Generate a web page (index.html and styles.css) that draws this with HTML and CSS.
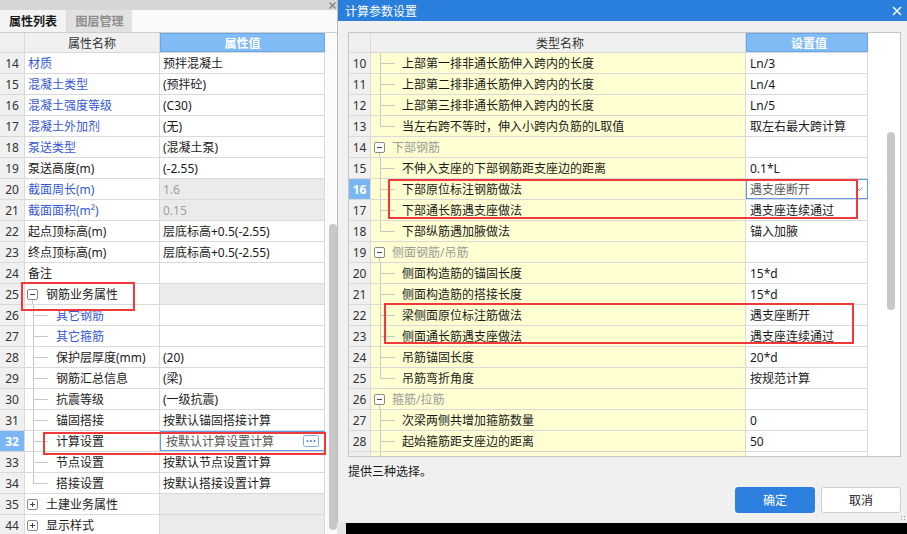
FILE: index.html
```html
<!DOCTYPE html>
<html lang="zh-CN">
<head>
    <meta charset="UTF-8">
    <title>计算参数设置</title>
    <link rel="stylesheet" href="styles.css">
</head>
<body>
    <div class="left">
        <div class="left-top">
            <svg class="left-close" width="7" height="7" viewBox="0 0 7 7"><path d="M0.5 0.5L6.5 6.5M6.5 0.5L0.5 6.5" stroke="#808080" stroke-width="1.2"/></svg>
        </div>
        <div class="tabs">
            <div class="tab on">属性列表</div>
            <div class="tab off">图层管理</div>
        </div>
        <div class="lbody">
            <div class="lgrid">
                <div class="row head">
                    <div class="c n"></div>
                    <div class="c k hd">属性名称</div>
                    <div class="c v hd sel">属性值</div>
                </div>
                <div class="row"><div class="c n">14</div><div class="c k blue">材质</div><div class="c v">预拌混凝土</div></div>
                <div class="row"><div class="c n">15</div><div class="c k blue">混凝土类型</div><div class="c v">(预拌砼)</div></div>
                <div class="row"><div class="c n">16</div><div class="c k blue">混凝土强度等级</div><div class="c v">(C30)</div></div>
                <div class="row"><div class="c n">17</div><div class="c k blue">混凝土外加剂</div><div class="c v">(无)</div></div>
                <div class="row"><div class="c n">18</div><div class="c k blue">泵送类型</div><div class="c v">(混凝土泵)</div></div>
                <div class="row"><div class="c n">19</div><div class="c k">泵送高度(m)</div><div class="c v">(-2.55)</div></div>
                <div class="row"><div class="c n">20</div><div class="c k blue">截面周长(m)</div><div class="c v grey">1.6</div></div>
                <div class="row"><div class="c n">21</div><div class="c k blue">截面面积(m²)</div><div class="c v grey">0.15</div></div>
                <div class="row"><div class="c n">22</div><div class="c k">起点顶标高(m)</div><div class="c v">层底标高+0.5(-2.55)</div></div>
                <div class="row"><div class="c n">23</div><div class="c k">终点顶标高(m)</div><div class="c v">层底标高+0.5(-2.55)</div></div>
                <div class="row"><div class="c n">24</div><div class="c k">备注</div><div class="c v"></div></div>
                <div class="row"><div class="c n">25</div><div class="c k"><span class="grp open"><span class="tog"></span></span>钢筋业务属性</div><div class="c v shade"></div></div>
                <div class="row"><div class="c n">26</div><div class="c k"><span class="tree"></span><span class="blue">其它钢筋</span></div><div class="c v"></div></div>
                <div class="row"><div class="c n">27</div><div class="c k"><span class="tree"></span><span class="blue">其它箍筋</span></div><div class="c v"></div></div>
                <div class="row"><div class="c n">28</div><div class="c k"><span class="tree"></span>保护层厚度(mm)</div><div class="c v">(20)</div></div>
                <div class="row"><div class="c n">29</div><div class="c k"><span class="tree"></span>钢筋汇总信息</div><div class="c v">(梁)</div></div>
                <div class="row"><div class="c n">30</div><div class="c k"><span class="tree"></span>抗震等级</div><div class="c v">(一级抗震)</div></div>
                <div class="row"><div class="c n">31</div><div class="c k"><span class="tree"></span>锚固搭接</div><div class="c v">按默认锚固搭接计算</div></div>
                <div class="row"><div class="c n cur">32</div><div class="c k"><span class="tree"></span>计算设置</div><div class="c v edit">按默认计算设置计算<svg class="more" width="16" height="12" viewBox="0 0 16 12"><rect x="0.5" y="0.5" width="15" height="11" rx="2" fill="#fff" stroke="#7aaee8"/><circle cx="4.5" cy="6" r="1" fill="#3a7fd8"/><circle cx="8" cy="6" r="1" fill="#3a7fd8"/><circle cx="11.5" cy="6" r="1" fill="#3a7fd8"/></svg></div></div>
                <div class="row"><div class="c n">33</div><div class="c k"><span class="tree"></span>节点设置</div><div class="c v">按默认节点设置计算</div></div>
                <div class="row"><div class="c n">34</div><div class="c k"><span class="tree end"></span>搭接设置</div><div class="c v">按默认搭接设置计算</div></div>
                <div class="row"><div class="c n">35</div><div class="c k"><span class="grp"><span class="tog plus"></span></span>土建业务属性</div><div class="c v shade"></div></div>
                <div class="row"><div class="c n">44</div><div class="c k"><span class="grp"><span class="tog plus"></span></span>显示样式</div><div class="c v shade"></div></div>

                <div class="mark mark-a"></div>
                <div class="mark mark-b"></div>
            </div>
            <div class="lscroll"><div class="thumb lthumb"></div></div>
        </div>
    </div>

    <div class="right">
        <div class="dialog">
            <div class="title">
                <span>计算参数设置</span>
                <svg class="close" width="10" height="10" viewBox="0 0 10 10"><path d="M1 1L9 9M9 1L1 9" stroke="#fff" stroke-width="1.5"/></svg>
            </div>
            <div class="dbody">
                <div class="dtable">
                    <div class="dgrid">
                        <div class="row head">
                            <div class="c dn"></div>
                            <div class="c dk hd">类型名称</div>
                            <div class="c dv hd sel">设置值</div>
                        </div>
                        <div class="row"><div class="c dn">10</div><div class="c dk"><span class="tree"></span>上部第一排非通长筋伸入跨内的长度</div><div class="c dv">Ln/3</div></div>
                        <div class="row"><div class="c dn">11</div><div class="c dk"><span class="tree"></span>上部第二排非通长筋伸入跨内的长度</div><div class="c dv">Ln/4</div></div>
                        <div class="row"><div class="c dn">12</div><div class="c dk"><span class="tree"></span>上部第三排非通长筋伸入跨内的长度</div><div class="c dv">Ln/5</div></div>
                        <div class="row"><div class="c dn">13</div><div class="c dk"><span class="tree end"></span>当左右跨不等时，伸入小跨内负筋的L取值</div><div class="c dv">取左右最大跨计算</div></div>
                        <div class="row"><div class="c dn">14</div><div class="c dk"><span class="grp open"><span class="tog"></span></span><span class="gtext">下部钢筋</span></div><div class="c dv"></div></div>
                        <div class="row"><div class="c dn">15</div><div class="c dk"><span class="tree"></span>不伸入支座的下部钢筋距支座边的距离</div><div class="c dv">0.1*L</div></div>
                        <div class="row"><div class="c dn cur">16</div><div class="c dk"><span class="tree"></span>下部原位标注钢筋做法</div><div class="c dv edit">遇支座断开<svg class="drop" width="7" height="4" viewBox="0 0 7 4"><path d="M0.5 0.5L3.5 3.5L6.5 0.5" fill="none" stroke="#888"/></svg></div></div>
                        <div class="row"><div class="c dn">17</div><div class="c dk"><span class="tree"></span>下部通长筋遇支座做法</div><div class="c dv">遇支座连续通过</div></div>
                        <div class="row"><div class="c dn">18</div><div class="c dk"><span class="tree end"></span>下部纵筋遇加腋做法</div><div class="c dv">锚入加腋</div></div>
                        <div class="row"><div class="c dn">19</div><div class="c dk"><span class="grp open"><span class="tog"></span></span><span class="gtext">侧面钢筋/吊筋</span></div><div class="c dv"></div></div>
                        <div class="row"><div class="c dn">20</div><div class="c dk"><span class="tree"></span>侧面构造筋的锚固长度</div><div class="c dv">15*d</div></div>
                        <div class="row"><div class="c dn">21</div><div class="c dk"><span class="tree"></span>侧面构造筋的搭接长度</div><div class="c dv">15*d</div></div>
                        <div class="row"><div class="c dn">22</div><div class="c dk"><span class="tree"></span>梁侧面原位标注筋做法</div><div class="c dv">遇支座断开</div></div>
                        <div class="row"><div class="c dn">23</div><div class="c dk"><span class="tree"></span>侧面通长筋遇支座做法</div><div class="c dv">遇支座连续通过</div></div>
                        <div class="row"><div class="c dn">24</div><div class="c dk"><span class="tree"></span>吊筋锚固长度</div><div class="c dv">20*d</div></div>
                        <div class="row"><div class="c dn">25</div><div class="c dk"><span class="tree end"></span>吊筋弯折角度</div><div class="c dv">按规范计算</div></div>
                        <div class="row"><div class="c dn">26</div><div class="c dk"><span class="grp open"><span class="tog"></span></span><span class="gtext">箍筋/拉筋</span></div><div class="c dv"></div></div>
                        <div class="row"><div class="c dn">27</div><div class="c dk"><span class="tree"></span>次梁两侧共增加箍筋数量</div><div class="c dv">0</div></div>
                        <div class="row"><div class="c dn">28</div><div class="c dk"><span class="tree"></span>起始箍筋距支座边的距离</div><div class="c dv">50</div></div>
                        <div class="row"><div class="c dn"></div><div class="c dk"><span class="tree"></span></div><div class="c dv"></div></div>
                    </div>
                    <div class="dscroll"><div class="thumb dthumb"></div></div>

                    <div class="mark mark-c"></div>
                    <div class="mark mark-d"></div>
                </div>
                <div class="hint">提供三种选择。</div>
                <div class="btns">
                    <button class="btn ok">确定</button>
                    <button class="btn cancel">取消</button>
                </div>
                <div class="grip"></div>
            </div>
        </div>
        <div class="under"><div class="black"></div></div>
    </div>
</body>
</html>
```

FILE: styles.css
```css
* {
    box-sizing: border-box;
}

body {
    margin: 0;
    width: 907px;
    height: 534px;
    overflow: hidden;
    display: flex;
    background: #fff;
    color: #1a1a1a;
    font-family: "Noto Sans", "Noto Sans CJK SC", sans-serif;
    font-size: 12px;
}

/* left property panel */
.left {
    width: 337px;
    height: 534px;
    display: flex;
    flex-direction: column;
    overflow: hidden;
    background: #fff;
}

.left-top {
    height: 10px;
    background: #d6d6d6;
    display: flex;
    justify-content: flex-end;
    align-items: center;
    padding-right: 1px;
}

.tabs {
    height: 23px;
    display: flex;
    border-bottom: 1px solid #cdcdcd;
    background: #fafafa;
}

.tab {
    width: 67px;
    display: flex;
    align-items: center;
    justify-content: center;
    font-weight: bold;
}

.tab.on {
    background: #f3f3f3;
    border-right: 1px solid #d8d8d8;
}

.tab.off {
    width: 65px;
    background: #e1e1e1;
    color: #8c8c8c;
}

.lbody {
    flex: 1;
    display: flex;
    min-height: 0;
}

.lgrid {
    width: 325px;
    position: relative;
}

.lscroll {
    width: 12px;
    background: #fbfbfb;
}

.thumb {
    width: 8px;
    background: #c8c8c8;
    border-radius: 4px;
}

.lthumb {
    margin: 191px 0 0 4px;
    height: 306px;
}

/* shared grid rows */
.row {
    display: flex;
    height: 21px;
    border-bottom: 1px solid #d9d9d9;
}

.row.head {
    height: 20px;
}

.c {
    display: flex;
    align-items: center;
    border-right: 1px solid #d9d9d9;
    white-space: nowrap;
    overflow: hidden;
}

.n {
    width: 25px;
    justify-content: center;
    background: #f0f0f0;
    color: #333;
}

.k {
    width: 135px;
    padding-left: 3px;
}

.v {
    width: 165px;
    padding-left: 3px;
}

.hd {
    justify-content: center;
    padding-left: 0;
    background: #f0f0f0;
    color: #333;
}

.hd.sel {
    background: #80bbf6;
    border: 1px solid #65a6ec;
    color: #fff;
    font-weight: bold;
}

.row .cur {
    background: #7ab6f4;
    color: #fff;
    font-weight: bold;
}

.blue {
    color: #3658d6;
}

.grey {
    background: #ebebeb;
    color: #a0a0a0;
}

.shade {
    background: #ebebeb;
}

.edit {
    outline: 1px solid #5b9ce8;
    outline-offset: -1px;
    color: #555;
    padding-left: 6px;
}

.more {
    margin-left: auto;
    margin-right: 5px;
    flex: none;
}

/* tree lines and toggles */
.tree {
    align-self: stretch;
    flex: none;
    width: 15px;
    margin: 0 8px 0 5px;
    background:
        linear-gradient(#c8c8c8, #c8c8c8) 0 0 / 1px 100% no-repeat,
        linear-gradient(#c8c8c8, #c8c8c8) 0 50% / 100% 1px no-repeat;
}

.tree.end {
    background:
        linear-gradient(#c8c8c8, #c8c8c8) 0 0 / 1px 50% no-repeat,
        linear-gradient(#c8c8c8, #c8c8c8) 0 50% / 100% 1px no-repeat;
}

.grp {
    align-self: stretch;
    flex: none;
    display: flex;
    align-items: center;
    width: 11px;
    margin: 0 8px 0 -1px;
}

.grp.open {
    background: linear-gradient(#c8c8c8, #c8c8c8) 5px 100% / 1px 50% no-repeat;
}

.tog {
    width: 11px;
    height: 11px;
    border: 1px solid #8a8a8a;
    border-radius: 2px;
    background: #fff linear-gradient(#444, #444) center / 5px 1px no-repeat;
}

.tog.plus {
    background:
        linear-gradient(#444, #444) center / 5px 1px no-repeat,
        linear-gradient(#444, #444) center / 1px 5px no-repeat,
        #fff;
}

/* red annotation boxes */
.mark {
    position: absolute;
    border: 2px solid #f03a3a;
}

.mark-a {
    left: 21px;
    top: 249px;
    width: 114px;
    height: 29px;
}

.mark-b {
    left: 43px;
    top: 399px;
    width: 283px;
    height: 23px;
}

.mark-c {
    left: 39px;
    top: 146px;
    width: 470px;
    height: 40px;
}

.mark-d {
    left: 35px;
    top: 270px;
    width: 470px;
    height: 41px;
}

/* dialog */
.right {
    width: 570px;
    display: flex;
    flex-direction: column;
}

.dialog {
    height: 523px;
    display: flex;
    flex-direction: column;
    background: #f0f0f0;
    border-left: 1px solid #bdbdbd;
}

.title {
    height: 21px;
    background: #2b7fdc;
    color: #fff;
    display: flex;
    align-items: center;
    justify-content: space-between;
    padding: 0 5px 0 7px;
}

.dbody {
    flex: 1;
    position: relative;
    padding: 11px 6px 0 10px;
    display: flex;
    flex-direction: column;
}

.dtable {
    height: 425px;
    display: flex;
    position: relative;
    border: 1px solid #c6c6c6;
    background: #fff;
    overflow: hidden;
}

.dgrid {
    width: 519px;
}

.dn {
    width: 22px;
    justify-content: center;
    background: #f0f0f0;
    color: #333;
}

.dk {
    width: 375px;
    background: #ffffd2;
    padding-left: 4px;
}

.dk.hd {
    background: #f0f0f0;
}

.dv {
    width: 122px;
    padding-left: 4px;
}

.dk .tree {
    margin: 0 7px 0 5px;
}

.dk .grp {
    margin: 0 7px 0 -1px;
}

.gtext {
    color: #9a9a9a;
}

.drop {
    margin-left: auto;
    margin-right: 4px;
}

.dscroll {
    flex: 1;
    background: #fff;
}

.dthumb {
    margin: 99px 0 0 19px;
    height: 178px;
}

.hint {
    margin-top: 6px;
    line-height: 17px;
    height: 17px;
}

.btns {
    margin-top: 7px;
    display: flex;
    justify-content: flex-end;
    gap: 6px;
}

.btn {
    width: 80px;
    height: 26px;
    border-radius: 3px;
    font-family: inherit;
    font-size: 12px;
    padding: 0;
}

.ok {
    background: #2e80e0;
    border: 1px solid #2e80e0;
    color: #fff;
}

.cancel {
    background: #fff;
    border: 1px solid #cfcfcf;
    color: #222;
}

.grip {
    position: absolute;
    right: 1px;
    bottom: 2px;
    width: 6px;
    height: 6px;
    background: radial-gradient(circle, #9a9a9a 0.8px, transparent 1px) 0 0 / 3px 3px;
}

.under {
    flex: 1;
    background: #e6e6e6;
    padding-left: 9px;
}

.black {
    height: 100%;
    background: #000;
}
```
